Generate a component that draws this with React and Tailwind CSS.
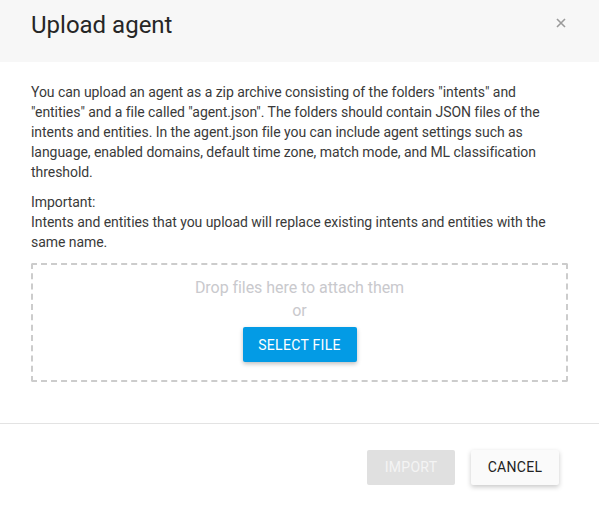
export default function App() {
  return (
    <div className="w-[599px] h-[509px] bg-white font-['Roboto',sans-serif] text-[#3a3a3a]">
      <div className="h-[62px] bg-[#f7f7f7] px-[31px] pt-[9px] flex justify-between">
        <h1 className="text-[24px] leading-[32px] text-[#262626]">Upload agent</h1>
        <button className="h-[20px] mt-[4px] mr-[2px]">
          <svg width="10" height="10" viewBox="0 0 10 10" className="block">
            <path d="M1 1L9 9M9 1L1 9" stroke="#9a9a9a" strokeWidth="1.6" />
          </svg>
        </button>
      </div>

      <div className="px-[31px] pt-[20px] pb-[41px] text-[14px] leading-[20px] tracking-[-0.05px]">
        <p>
          You can upload an agent as a zip archive consisting of the folders "intents" and
          "entities" and a file called "agent.json". The folders should contain JSON files of the
          intents and entities. In the agent.json file you can include agent settings such as
          language, enabled domains, default time zone, match mode, and ML classification
          threshold.
        </p>
        <p className="mt-[10px]">
          Important:
          <br />
          Intents and entities that you upload will replace existing intents and entities with the
          same name.
        </p>

        <div className="mt-[11px] border-2 border-dashed border-[#ccc] rounded-[2px] flex flex-col items-center pt-[11px] pb-[18px]">
          <div className="text-[16px] leading-[23px] text-[#c9c9cd]">Drop files here to attach them</div>
          <div className="text-[16px] leading-[23px] text-[#c9c9cd]">or</div>
          <button className="mt-[5px] h-[35px] w-[114px] bg-[#039be5] text-white text-[14px] uppercase tracking-[0.3px] rounded-[2px] shadow-[0_2px_4px_rgba(0,0,0,0.25)]">
            Select file
          </button>
        </div>
      </div>

      <div className="border-t border-[#e3e3e3] flex justify-end gap-[16px] pt-[26px] pr-[40px]">
        <button className="h-[35px] w-[88px] bg-[#e0e0e0] text-[#f4f4f4] text-[14px] uppercase tracking-[0.3px] rounded-[2px]">
          Import
        </button>
        <button className="h-[35px] w-[88px] bg-[#fafafa] text-[#222] text-[14px] uppercase tracking-[0.3px] rounded-[2px] shadow-[0_2px_5px_rgba(0,0,0,0.22)]">
          Cancel
        </button>
      </div>
    </div>
  );
}
